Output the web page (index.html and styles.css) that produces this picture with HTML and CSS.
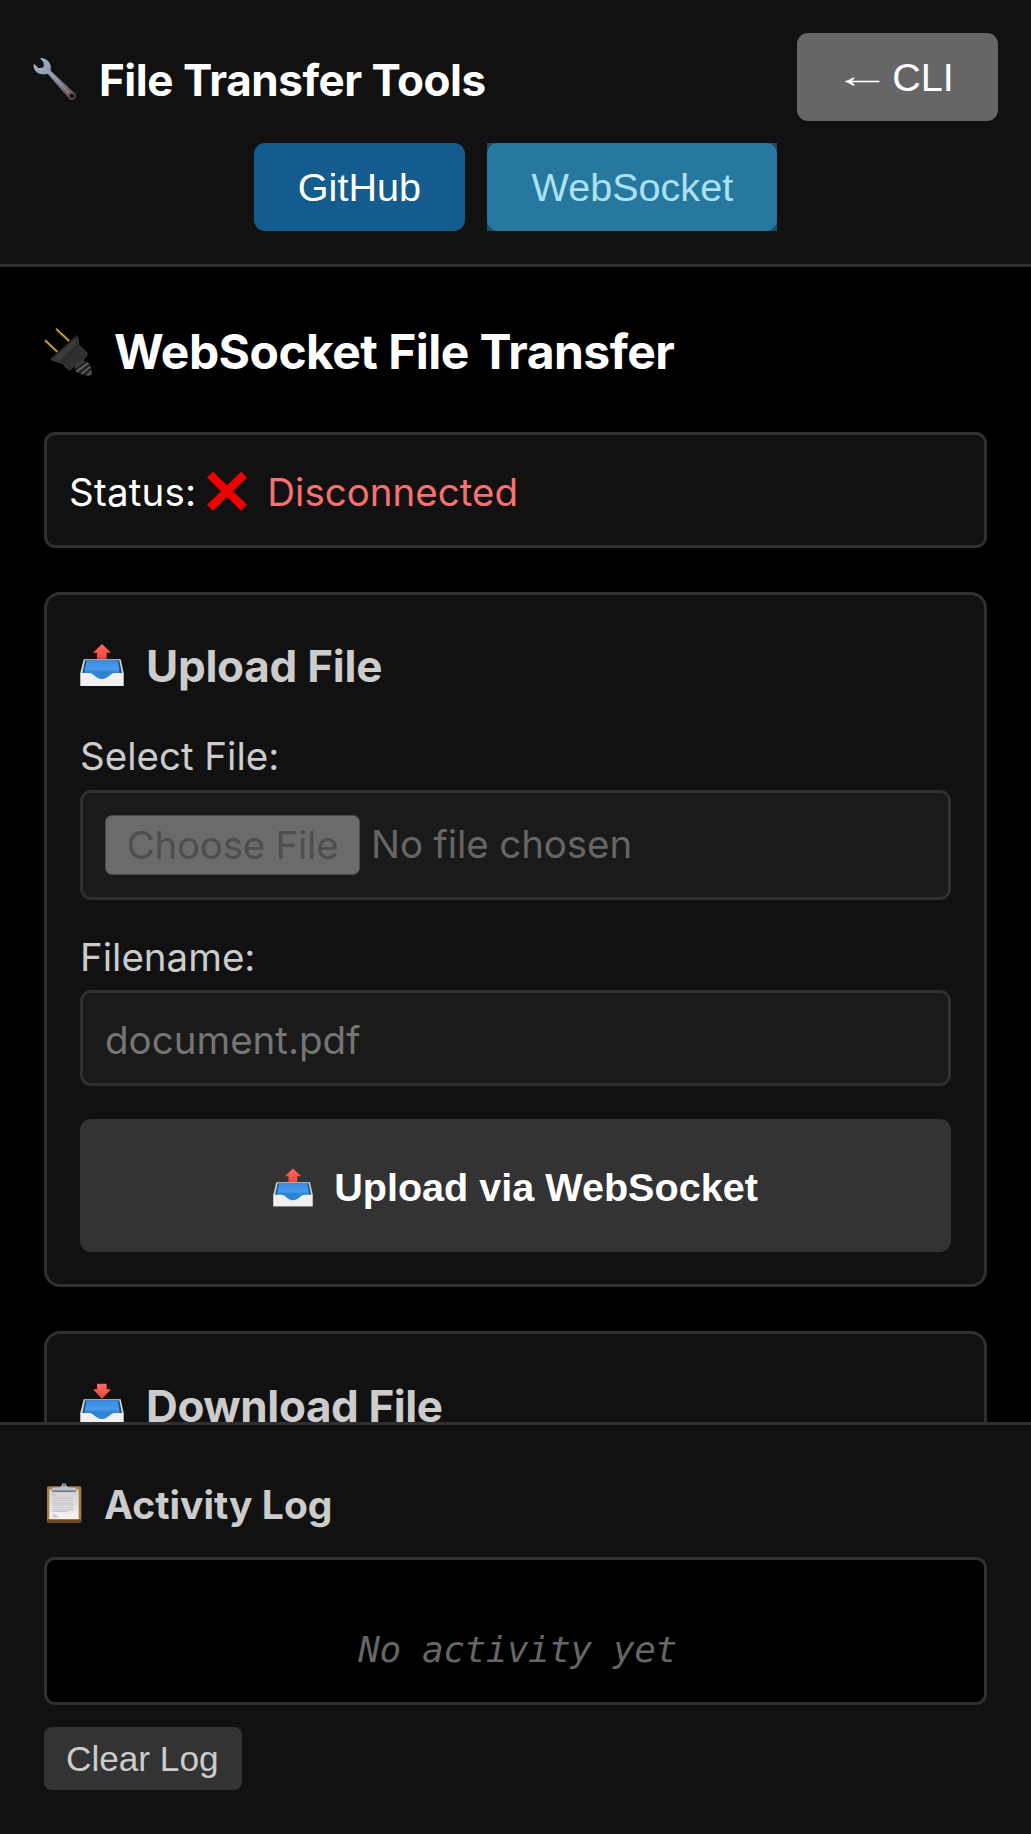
FILE: index.html
```html
<!DOCTYPE html>
<html lang="en">
<head>
<meta charset="utf-8">
<title>File Transfer Tools</title>
<link rel="stylesheet" href="styles.css">
</head>
<body>
<svg class="sprite" width="0" height="0" aria-hidden="true">
  <defs>
    <linearGradient id="steel" x1="0" y1="0" x2="1" y2="1">
      <stop offset="0" stop-color="#a9bccb"/><stop offset=".45" stop-color="#8b95a3"/><stop offset="1" stop-color="#5c4448"/>
    </linearGradient>
    <linearGradient id="well" x1="0" y1="0" x2="0" y2="1">
      <stop offset="0" stop-color="#3b8be0"/><stop offset=".45" stop-color="#489bee"/><stop offset=".6" stop-color="#2f83cf"/><stop offset="1" stop-color="#2a86d6"/>
    </linearGradient>
    <linearGradient id="red" x1="0" y1="0" x2="0" y2="1">
      <stop offset="0" stop-color="#ff6a60"/><stop offset="1" stop-color="#f8453c"/>
    </linearGradient>
    <linearGradient id="paper" x1="0" y1="0" x2="0" y2="1">
      <stop offset="0" stop-color="#d0d0d0"/><stop offset="1" stop-color="#f4f4f4"/>
    </linearGradient>
    <symbol id="tray" viewBox="0 0 132 126">
      <path d="M11 45.500H122L131 86V126H1V86Z" fill="#d8d6cd"/>
      <path d="M15 49H118L126 88H7Z" fill="#1a5687"/>
      <path d="M20 49H113L120 90L66 108L12 90Z" fill="url(#well)"/>
      <path d="M2 87H28C42 87 46 105 66 105S90 87 104 87H130V124Q130 126 128 126H4Q2 126 2 124Z" fill="#f1f0ee"/>
    </symbol>
  </defs>
</svg>

<div class="app">
  <header class="topbar">
    <h1 class="title">
      <svg class="title-icon" viewBox="99 171 132 132">
        <path d="M120 174C134 174 149 182 152 197C153 203 152 209 152 212L226 281A12.500 12.500 0 0 1 209 298L143 221C128 227 108 222 102 205C100 200 101 195 102 191L115 204L127 203L132 197L130 187Z" fill="url(#steel)"/>
        <path d="M150 217L207 279" stroke="#c9d6e2" stroke-width="3" opacity=".55"/>
        <ellipse cx="216" cy="288" rx="7.500" ry="6.500" fill="#111"/>
      </svg>
      <span>File Transfer Tools</span>
    </h1>
    <button class="nav-btn nav-btn--back"><span class="arrow">←</span><span>CLI</span></button>
    <nav class="tabs">
      <button class="nav-btn nav-btn--github">GitHub</button>
      <button class="nav-btn nav-btn--pressed"><span class="pressed-face">WebSocket</span></button>
    </nav>
  </header>

  <main class="content">
    <h2 class="heading">
      <svg class="heading-icon" viewBox="132 80 144 144">
        <path d="M135 117L174 154M168 83L209 121" stroke="#94731d" stroke-width="7"/>
        <path d="M136 116L174 152M169 82L209 119" stroke="#e3c04a" stroke-width="3"/>
        <path d="M228 103L234 108L236 131L262 155L259 164L244 181L226 188L210 207L200 200L187 186L156 176L153 170Z" fill="#2d2d2f" stroke="#59595b" stroke-width="2"/>
        <path d="M226 106L230 128L180 178L156 172Z" fill="#3b3b3d"/>
        <path d="M228 104L154 171" stroke="#111" stroke-width="4"/>
        <path d="M236 132L258 158L238 172L208 202L190 184Z" fill="#303032"/>
        <path d="M246 176L268 186L273 200L276 221L262 224L228 212L222 194Z" fill="#3c3c3e"/>
        <path d="M226 205L260 180M238 214L269 190M252 220L272 202" stroke="#161616" stroke-width="4"/>
        <path d="M229 211L264 185M244 218L271 196M264 222L274 211" stroke="#8b8b8d" stroke-width="2.500"/>
      </svg>
      <span>WebSocket File Transfer</span>
    </h2>

    <section class="status">
      <span class="status-label">Status:</span>
      <svg class="status-icon" viewBox="621 513 120 119">
        <path d="M639 514L681 556L723 514L741 532L699 573L741 614L723 632L681 590L639 632L621 614L663 573L621 532Z" fill="#f00000"/>
      </svg>
      <span class="status-value">Disconnected</span>
    </section>

    <section class="card">
      <h3 class="card-title">
        <svg class="card-icon" viewBox="0 0 132 126">
          <use href="#tray" width="132" height="126"/>
          <path d="M66 0L93 26H80V44.500H51V26H39Z" fill="url(#red)"/>
        </svg>
        <span>Upload File</span>
      </h3>
      <div class="field">
        <label class="label">Select File:</label>
        <div class="input input--file">
          <button class="choose" disabled>Choose File</button>
          <span class="choose-name">No file chosen</span>
        </div>
      </div>
      <div class="field">
        <label class="label">Filename:</label>
        <div class="input input--text">document.pdf</div>
      </div>
      <button class="submit">
        <svg class="submit-icon" viewBox="0 0 132 126">
          <use href="#tray" width="132" height="126"/>
          <path d="M66 0L93 26H80V44.500H51V26H39Z" fill="url(#red)"/>
        </svg>
        <span>Upload via WebSocket</span>
      </button>
    </section>

    <section class="card">
      <h3 class="card-title card-title--download">
        <svg class="card-icon" viewBox="0 0 132 126">
          <use href="#tray" width="132" height="126"/>
          <path d="M51 -1H80V16H93L66 44L39 16H51Z" fill="url(#red)"/>
        </svg>
        <span>Download File</span>
      </h3>
    </section>
  </main>

  <footer class="log">
    <h4 class="log-title">
      <svg class="log-icon" viewBox="42 519 117 119">
        <rect x="51" y="528" width="103" height="110" rx="5" fill="#a97c40"/>
        <path d="M52 627H153V633Q153 638 148 638H57Q52 638 52 633Z" fill="#70481d"/>
        <rect x="58" y="538" width="88" height="89" fill="url(#paper)"/>
        <path d="M67 554H80M67 564H128M67 571H130M67 578H128M67 585H131M67 592H130M67 599H131M67 604H112M67 615H78M67 620H86" stroke="#c2c2c2" stroke-width="3.500"/>
        <path d="M66 545V536Q66 532 72 532H88Q93 530 95 527H109Q111 530 116 532H132Q138 532 138 536V545Z" fill="#bcc4cf"/>
        <path d="M66 543H138" stroke="#64666c" stroke-width="4"/>
        <circle cx="102" cy="526" r="5" fill="none" stroke="#b5bac6" stroke-width="4"/>
      </svg>
      <span>Activity Log</span>
    </h4>
    <div class="log-box">No activity yet</div>
    <button class="clear">Clear Log</button>
  </footer>
</div>
</body>
</html>
```
FILE: styles.css
```css
* { box-sizing: border-box; }

body {
  margin: 0;
  background: #000;
  color: #fff;
  font-family: Inter, "Liberation Sans", sans-serif;
  font-size: 38.5px;
}

h1, h2, h3, h4 { margin: 0; }

svg { display: block; flex: none; overflow: visible; }

.sprite { position: absolute; }

button {
  border: 0;
  padding: 0;
  font-family: "Liberation Sans", Arial, sans-serif;
}

.app {
  display: flex;
  flex-direction: column;
  height: 1834px;
  overflow: hidden;
}

/* Header */
.topbar {
  display: flex;
  flex-wrap: wrap;
  justify-content: space-between;
  align-items: center;
  gap: 22px;
  flex: none;
  height: 267px;
  padding: 33px 33px 0;
  align-content: flex-start;
  background: #111;
  border-bottom: 3px solid #303030;
}

.title {
  display: flex;
  align-items: center;
  gap: 22px;
  padding-top: 6px;
  font-size: 44px;
  font-weight: 700;
  line-height: 54px;
  letter-spacing: -0.47px;
}

.title-icon { width: 44px; height: 44px; margin-top: -2px; }

.nav-btn {
  display: flex;
  align-items: center;
  height: 88px;
  padding: 0 44.25px;
  border-radius: 11px;
  color: #fff;
  font-size: 39.6px;
}

.nav-btn--back { gap: 11px; background: #666; }

.arrow {
  width: 39.6px;
  margin-top: -3px;
  font-size: 33px;
  text-align: center;
  transform: scaleX(1.75);
}

.tabs {
  display: flex;
  justify-content: center;
  gap: 22px;
  width: 100%;
}

.nav-btn--github { background: #155c8e; }

.nav-btn--pressed {
  padding: 0;
  border-radius: 0;
  background: #1d4c60;
  color: #ace2f6;
}

.pressed-face {
  padding: 0 44.25px;
  border-radius: 11px;
  background: #26789f;
  line-height: 88px;
}

/* Content */
.content {
  flex: 1;
  min-height: 0;
  padding: 44px 44px 0;
  overflow: hidden;
}

.heading {
  display: flex;
  align-items: center;
  gap: 22px;
  height: 81px;
  margin-bottom: 40px;
  font-size: 48px;
  font-weight: 700;
  letter-spacing: -0.55px;
}

.heading-icon { width: 48px; height: 48px; }

.status {
  display: flex;
  align-items: center;
  height: 116px;
  margin-bottom: 44px;
  padding: 4px 22px 0;
  background: #111;
  border: 3px solid #303030;
  border-radius: 11px;
}

.status-label { letter-spacing: 0.2px; }

.status-icon { width: 40px; height: 40px; margin: -2px 20px 0 11px; }

.status-value { color: #f87171; }

.card {
  margin-bottom: 44px;
  padding: 33px 33px 32px;
  background: #111;
  border: 3px solid #303030;
  border-radius: 16px;
}

.card-title {
  display: flex;
  align-items: center;
  gap: 22px;
  height: 76px;
  margin-bottom: 29px;
  color: #ccc;
  font-size: 44px;
  font-weight: 700;
  letter-spacing: -0.25px;
}

.card-title--download { height: 78px; letter-spacing: -0.4px; }

.card-icon { width: 44px; height: 42px; margin-top: -2px; }

.field { margin-bottom: 34px; }

.field + .field { margin-bottom: 33px; }

.label {
  display: block;
  margin-bottom: 10px;
  color: #ccc;
  line-height: 46px;
}

.input {
  display: flex;
  align-items: center;
  padding: 0 22px;
  background: #1a1a1a;
  border: 3px solid #303030;
  border-radius: 11px;
}

.input--file { height: 110px; margin-top: 11px; padding-bottom: 1px; }

.input--text { height: 96px; padding-top: 3px; color: #757575; }

.choose {
  width: 255px;
  height: 60px;
  margin-right: 11px;
  border: 1px solid #4a4a4a;
  border-radius: 7px;
  background: #6b6b6b;
  color: #4e4e4e;
  font-family: Inter, sans-serif;
  font-size: 38.5px;
  line-height: 56px;
  letter-spacing: -0.25px;
}

.choose-name { margin-top: -1px; color: #666; letter-spacing: -0.1px; }

.submit {
  display: flex;
  align-items: center;
  justify-content: center;
  gap: 21px;
  width: 100%;
  height: 133px;
  padding-top: 4px;
  border-radius: 11px;
  background: #333;
  color: #fff;
  font-size: 39.6px;
  font-weight: 700;
}

.submit-icon { width: 40px; height: 39px; margin-top: -1px; }

/* Activity log */
.log {
  flex: none;
  height: 412px;
  padding: 44px 44px 0;
  background: #111;
  border-top: 3px solid #303030;
}

.log-title {
  display: flex;
  align-items: center;
  gap: 21px;
  height: 70px;
  margin-bottom: 18px;
  color: #ccc;
  font-size: 39px;
  font-weight: 700;
}

.log-icon { width: 39px; height: 40px; margin-top: -2px; }

.log-box {
  height: 148px;
  padding: 69px 0 0 4px;
  background: #000;
  border: 3px solid #303030;
  border-radius: 11px;
  color: #666;
  font: italic 36px/42px "DejaVu Sans Mono", monospace;
  letter-spacing: -0.45px;
  text-align: center;
}

.clear {
  display: block;
  height: 63px;
  margin-top: 22px;
  padding: 0 23px 0 22px;
  border-radius: 8px;
  background: #333;
  color: #ccc;
  font-size: 35.2px;
}
```
